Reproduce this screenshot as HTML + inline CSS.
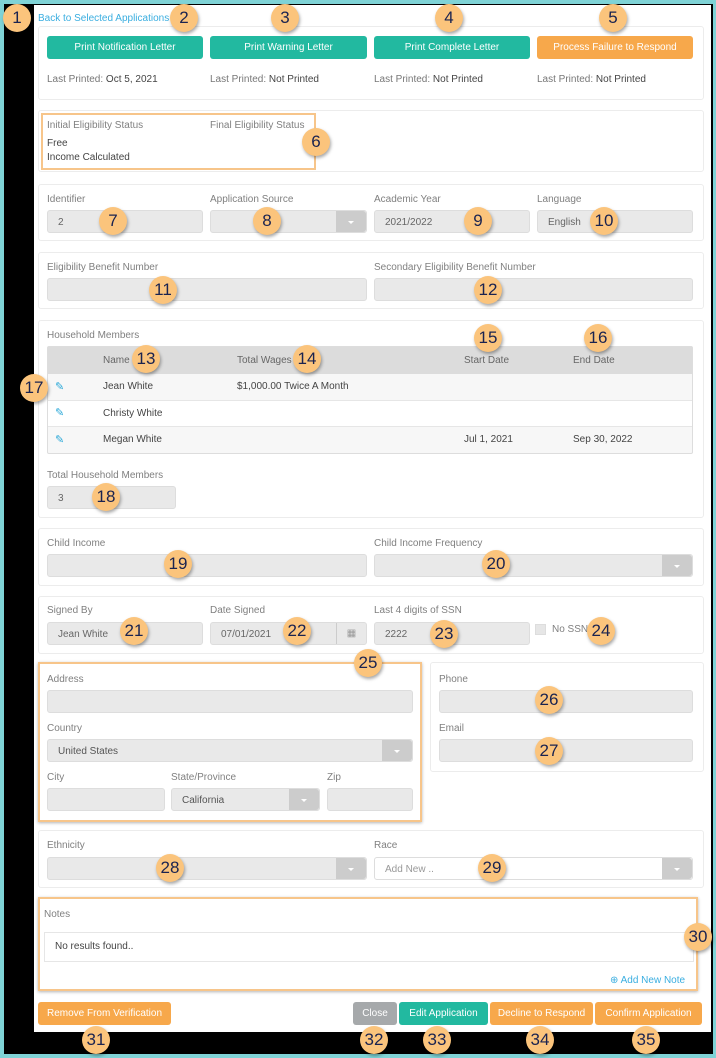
<!DOCTYPE html>
<html><head><meta charset="utf-8"><style>
*{box-sizing:border-box;margin:0;padding:0}
body{width:716px;height:1058px;background:#7fd3d6;position:relative;overflow:hidden;font-family:"Liberation Sans",sans-serif;font-size:10px;color:#444}
.a{position:absolute}
.blk{left:4px;top:4px;width:709px;height:1050px;background:#000}
.wh{left:34px;top:5px;width:677px;height:1027px;background:#fff}
.card{position:absolute;border:1px solid #ececec;border-radius:3px;background:#fff}
.or{position:absolute;border:2px solid #f7c58a;background:#fff;box-shadow:0 1px 3px rgba(0,0,0,.3)}
.lbl{position:absolute;color:#808080;font-size:10px}
.txt{position:absolute;color:#444;font-size:10px}
.inp{position:absolute;background:#e9e9e9;border:1px solid #ddd;border-radius:3px;height:23px;color:#666;font-size:10px;padding:6px 0 0 10px}
.dd{position:absolute;right:0;top:0;bottom:0;width:30px;background:#ccc;border-radius:0 3px 3px 0}
.dd:after{content:"";position:absolute;left:12px;top:10px;border-left:3px solid transparent;border-right:3px solid transparent;border-top:3px solid #fff}
.btn{position:absolute;color:#fff;font-size:10px;text-align:center;border-radius:3px;height:23px;line-height:23px}
.t{background:#22b9a0}.o{background:#f7a84b}.g{background:#a6a9ab}
.b{position:absolute;width:28px;height:28px;border-radius:50%;background:#fbc47c;color:#1a2350;font-size:17px;text-align:center;line-height:28px;box-shadow:1px 2px 3px rgba(0,0,0,.35);transform:translate(-14px,-14px)}
.pen{position:absolute;color:#2aa8d8;font-size:11px}
</style></head><body>
<div class="a blk"></div>
<div class="a wh"></div>

<div class="txt" style="left:38px;top:13px;color:#3aaee0">Back to Selected Applications</div>
<div class="card" style="left:38px;top:26px;width:666px;height:74px"></div>
<div class="btn t" style="left:47px;top:36px;width:156px">Print Notification Letter</div>
<div class="btn t" style="left:210px;top:36px;width:157px">Print Warning Letter</div>
<div class="btn t" style="left:374px;top:36px;width:156px">Print Complete Letter</div>
<div class="btn o" style="left:537px;top:36px;width:156px">Process Failure to Respond</div>
<div class="txt" style="left:47px;top:74px"><span style="color:#777">Last Printed:</span> Oct 5, 2021</div>
<div class="txt" style="left:210px;top:74px"><span style="color:#777">Last Printed:</span> Not Printed</div>
<div class="txt" style="left:374px;top:74px"><span style="color:#777">Last Printed:</span> Not Printed</div>
<div class="txt" style="left:537px;top:74px"><span style="color:#777">Last Printed:</span> Not Printed</div>

<div class="card" style="left:38px;top:110px;width:666px;height:62px"></div>
<div class="or" style="left:41px;top:113px;width:275px;height:57px;box-shadow:none"></div>
<div class="lbl" style="left:47px;top:120px">Initial Eligibility Status</div>
<div class="lbl" style="left:210px;top:120px">Final Eligibility Status</div>
<div class="txt" style="left:47px;top:138px">Free</div>
<div class="txt" style="left:47px;top:152px">Income Calculated</div>

<div class="card" style="left:38px;top:184px;width:666px;height:57px"></div>
<div class="lbl" style="left:47px;top:194px">Identifier</div>
<div class="lbl" style="left:210px;top:194px">Application Source</div>
<div class="lbl" style="left:374px;top:194px">Academic Year</div>
<div class="lbl" style="left:537px;top:194px">Language</div>
<div class="inp" style="left:47px;top:210px;width:156px">2</div>
<div class="inp" style="left:210px;top:210px;width:157px"><div class="dd"></div></div>
<div class="inp" style="left:374px;top:210px;width:156px">2021/2022</div>
<div class="inp" style="left:537px;top:210px;width:156px">English</div>

<div class="card" style="left:38px;top:252px;width:666px;height:57px"></div>
<div class="lbl" style="left:47px;top:262px">Eligibility Benefit Number</div>
<div class="lbl" style="left:374px;top:262px">Secondary Eligibility Benefit Number</div>
<div class="inp" style="left:47px;top:278px;width:320px"></div>
<div class="inp" style="left:374px;top:278px;width:319px"></div>

<div class="card" style="left:38px;top:320px;width:666px;height:198px"></div>
<div class="lbl" style="left:47px;top:330px">Household Members</div>
<div class="a" style="left:47px;top:346px;width:646px;height:108px;border:1px solid #ddd;border-radius:2px;background:#f7f7f7"></div>
<div class="a" style="left:48px;top:347px;width:644px;height:27px;background:#dcdcdc"></div>
<div class="a" style="left:48px;top:400px;width:644px;height:27px;background:#fff;border-top:1px solid #e6e6e6;border-bottom:1px solid #e6e6e6"></div>
<div class="lbl" style="left:103px;top:355px;color:#666">Name</div>
<div class="lbl" style="left:237px;top:355px;color:#666">Total Wages</div>
<div class="lbl" style="left:464px;top:355px;color:#666">Start Date</div>
<div class="lbl" style="left:573px;top:355px;color:#666">End Date</div>
<div class="pen" style="left:55px;top:380px">✎</div>
<div class="pen" style="left:55px;top:406px">✎</div>
<div class="pen" style="left:55px;top:433px">✎</div>
<div class="txt" style="left:103px;top:381px">Jean White</div>
<div class="txt" style="left:237px;top:381px">$1,000.00 Twice A Month</div>
<div class="txt" style="left:103px;top:408px">Christy White</div>
<div class="txt" style="left:103px;top:434px">Megan White</div>
<div class="txt" style="left:464px;top:434px">Jul 1, 2021</div>
<div class="txt" style="left:573px;top:434px">Sep 30, 2022</div>
<div class="lbl" style="left:47px;top:470px">Total Household Members</div>
<div class="inp" style="left:47px;top:486px;width:129px">3</div>

<div class="card" style="left:38px;top:528px;width:666px;height:58px"></div>
<div class="lbl" style="left:47px;top:538px">Child Income</div>
<div class="lbl" style="left:374px;top:538px">Child Income Frequency</div>
<div class="inp" style="left:47px;top:554px;width:320px"></div>
<div class="inp" style="left:374px;top:554px;width:319px"><div class="dd"></div></div>

<div class="card" style="left:38px;top:596px;width:666px;height:58px"></div>
<div class="lbl" style="left:47px;top:605px">Signed By</div>
<div class="lbl" style="left:210px;top:605px">Date Signed</div>
<div class="lbl" style="left:374px;top:605px">Last 4 digits of SSN</div>
<div class="inp" style="left:47px;top:622px;width:156px">Jean White</div>
<div class="inp" style="left:210px;top:622px;width:157px">07/01/2021<div class="a" style="right:0;top:0;bottom:0;width:30px;border-left:1px solid #ccc;color:#999;text-align:center;padding-top:5px">▦</div></div>
<div class="inp" style="left:374px;top:622px;width:156px">2222</div>
<div class="a" style="left:535px;top:624px;width:11px;height:11px;background:#e6e6e6;border:1px solid #ddd"></div>
<div class="lbl" style="left:552px;top:624px">No SSN</div>

<div class="or" style="left:38px;top:662px;width:384px;height:160px"></div>
<div class="lbl" style="left:47px;top:674px">Address</div>
<div class="inp" style="left:47px;top:690px;width:366px"></div>
<div class="lbl" style="left:47px;top:723px">Country</div>
<div class="inp" style="left:47px;top:739px;width:366px;color:#555">United States<div class="dd"></div></div>
<div class="lbl" style="left:47px;top:772px">City</div>
<div class="lbl" style="left:171px;top:772px">State/Province</div>
<div class="lbl" style="left:327px;top:772px">Zip</div>
<div class="inp" style="left:47px;top:788px;width:118px"></div>
<div class="inp" style="left:171px;top:788px;width:149px;color:#555">California<div class="dd"></div></div>
<div class="inp" style="left:327px;top:788px;width:86px"></div>

<div class="card" style="left:430px;top:662px;width:274px;height:110px"></div>
<div class="lbl" style="left:439px;top:674px">Phone</div>
<div class="inp" style="left:439px;top:690px;width:254px"></div>
<div class="lbl" style="left:439px;top:723px">Email</div>
<div class="inp" style="left:439px;top:739px;width:254px"></div>

<div class="card" style="left:38px;top:830px;width:666px;height:58px"></div>
<div class="lbl" style="left:47px;top:840px">Ethnicity</div>
<div class="lbl" style="left:374px;top:840px">Race</div>
<div class="inp" style="left:47px;top:857px;width:320px"><div class="dd"></div></div>
<div class="inp" style="left:374px;top:857px;width:319px;background:#fff;color:#999">Add New ..<div class="dd"></div></div>

<div class="or" style="left:38px;top:897px;width:660px;height:94px"></div>
<div class="lbl" style="left:44px;top:909px">Notes</div>
<div class="a" style="left:44px;top:932px;width:650px;height:30px;border:1px solid #e6e6e6;background:#fff"></div>
<div class="txt" style="left:55px;top:941px">No results found..</div>
<div class="txt" style="left:610px;top:975px;color:#3aaee0">⊕ Add New Note</div>

<div class="btn o" style="left:38px;top:1002px;width:133px">Remove From Verification</div>
<div class="btn g" style="left:353px;top:1002px;width:44px">Close</div>
<div class="btn t" style="left:399px;top:1002px;width:89px">Edit Application</div>
<div class="btn o" style="left:490px;top:1002px;width:103px">Decline to Respond</div>
<div class="btn o" style="left:595px;top:1002px;width:107px">Confirm Application</div>

<div class="b" style="left:17px;top:18px">1</div>
<div class="b" style="left:184px;top:18px">2</div>
<div class="b" style="left:285px;top:18px">3</div>
<div class="b" style="left:449px;top:18px">4</div>
<div class="b" style="left:613px;top:18px">5</div>
<div class="b" style="left:316px;top:142px">6</div>
<div class="b" style="left:113px;top:221px">7</div>
<div class="b" style="left:267px;top:221px">8</div>
<div class="b" style="left:478px;top:221px">9</div>
<div class="b" style="left:604px;top:221px">10</div>
<div class="b" style="left:163px;top:290px">11</div>
<div class="b" style="left:488px;top:290px">12</div>
<div class="b" style="left:146px;top:359px">13</div>
<div class="b" style="left:307px;top:359px">14</div>
<div class="b" style="left:488px;top:338px">15</div>
<div class="b" style="left:598px;top:338px">16</div>
<div class="b" style="left:34px;top:388px">17</div>
<div class="b" style="left:106px;top:497px">18</div>
<div class="b" style="left:178px;top:564px">19</div>
<div class="b" style="left:496px;top:564px">20</div>
<div class="b" style="left:134px;top:631px">21</div>
<div class="b" style="left:297px;top:631px">22</div>
<div class="b" style="left:444px;top:634px">23</div>
<div class="b" style="left:601px;top:631px">24</div>
<div class="b" style="left:368px;top:663px">25</div>
<div class="b" style="left:549px;top:700px">26</div>
<div class="b" style="left:549px;top:751px">27</div>
<div class="b" style="left:170px;top:868px">28</div>
<div class="b" style="left:492px;top:868px">29</div>
<div class="b" style="left:698px;top:937px">30</div>
<div class="b" style="left:96px;top:1040px">31</div>
<div class="b" style="left:374px;top:1040px">32</div>
<div class="b" style="left:437px;top:1040px">33</div>
<div class="b" style="left:540px;top:1040px">34</div>
<div class="b" style="left:646px;top:1040px">35</div>
</body></html>
